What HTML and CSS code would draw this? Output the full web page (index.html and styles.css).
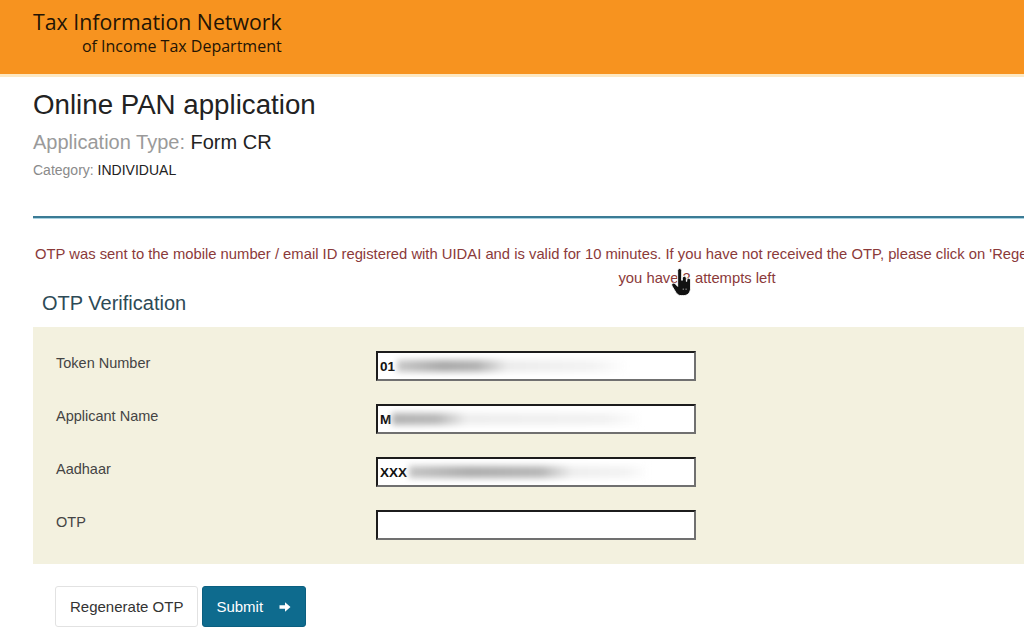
FILE: index.html
```html
<!DOCTYPE html>
<html lang="en">
<head>
<meta charset="utf-8">
<title>Online PAN application</title>
<link rel="stylesheet" href="styles.css">
</head>
<body>
<header class="top">
  <div class="brand">
    <div class="brand-main">Tax Information Network</div>
    <div class="brand-sub">of Income Tax Department</div>
  </div>
</header>
<main class="page">
  <section class="intro">
    <h1 class="title">Online PAN application</h1>
    <p class="app-type"><span class="muted">Application Type:</span> Form CR</p>
    <p class="category"><span class="muted">Category:</span> INDIVIDUAL</p>
  </section>
  <hr class="divider">
  <div class="msg">
    <p class="msg-line">OTP was sent to the mobile number / email ID registered with UIDAI and is valid for 10 minutes. If you have not received the OTP, please click on 'Regenerate OTP'.</p>
    <p class="msg-attempts">you have 2 attempts left</p>
    <svg class="cursor" viewBox="0 0 18 26" width="20" height="29" aria-hidden="true">
      <path d="M6 2.2a1.8 1.8 0 0 1 3.6 0V11h.6V9.2a1.8 1.8 0 0 1 3.6 0V12h.4v-1.2a1.7 1.7 0 0 1 3.4 0V18c0 4-2.6 6.8-6.2 6.8H9.2c-2.2 0-3.6-1.1-4.8-2.9L.9 16.2a1.8 1.8 0 0 1 2.9-2.1L6 16.5Z" fill="#111" stroke="#fff" stroke-width="0.8"/>
      <path d="M10.5 19h1.2M13 19h1.2" stroke="#bbb" stroke-width="0.8"/>
    </svg>
  </div>
  <h2 class="section-title">OTP Verification</h2>
  <form class="panel">
    <div class="row">
      <label class="label">Token Number</label>
      <div class="field"><span class="val">01</span><span class="blur blur-a"></span></div>
    </div>
    <div class="row">
      <label class="label">Applicant Name</label>
      <div class="field"><span class="val">M</span><span class="blur blur-b"></span></div>
    </div>
    <div class="row">
      <label class="label">Aadhaar</label>
      <div class="field"><span class="val">XXX</span><span class="blur blur-c"></span></div>
    </div>
    <div class="row">
      <label class="label">OTP</label>
      <div class="field"></div>
    </div>
  </form>
  <div class="actions">
    <button type="button" class="btn btn-light">Regenerate OTP</button>
    <button type="button" class="btn btn-primary">Submit
      <svg class="arrow" viewBox="0 0 12 12" width="12" height="12" aria-hidden="true"><path d="M0.5 4.3H6V1.2L11.5 6 6 10.8V7.7H0.5Z" fill="#fff"/></svg>
    </button>
  </div>
</main>
</body>
</html>
```

FILE: styles.css
```css
html, body {
  margin: 0;
  padding: 0;
  overflow: hidden;
  background: #fff;
  font-family: "Liberation Sans", Arial, sans-serif;
}

.top {
  box-sizing: content-box;
  height: 66px;
  padding-top: 8px;
  padding-left: 33px;
  background: #f7931f;
  border-bottom: 3px solid #fde8c2;
}

.brand {
  display: inline-flex;
  flex-direction: column;
  align-items: flex-end;
  color: #231405;
  font-family: "Open Sans", "Noto Sans", sans-serif;
}

.brand-main {
  font-size: 21.3px;
  line-height: 28px;
}

.brand-sub {
  font-size: 16px;
  line-height: 20px;
}

.page {
  width: 1328px;
  padding-left: 33px;
}

.intro {
  padding-top: 12px;
}

.title {
  margin: 0;
  font-size: 27.7px;
  line-height: 32px;
  font-weight: normal;
  color: #222;
}

.app-type {
  margin: 9px 0 0;
  font-size: 20px;
  line-height: 24px;
  color: #222;
}

.category {
  margin: 7px 0 0;
  font-size: 14px;
  line-height: 18px;
  color: #222;
}

.muted {
  color: #9a9a9a;
}

.category .muted {
  color: #8a8a8a;
}

.divider {
  margin: 37px 0 0;
  border: 0;
  height: 2px;
  background: #3b7b95;
  box-shadow: 0 1px 0 #a9d3e2;
}

.msg {
  position: relative;
  margin-top: 24px;
  color: #8b3a3a;
  font-size: 14.8px;
  line-height: 24px;
}

.msg p {
  margin: 0;
}

.msg-line {
  white-space: nowrap;
  padding-left: 2px;
}

.msg-attempts {
  text-align: center;
}

.cursor {
  position: absolute;
  left: 638px;
  top: 26px;
}

.section-title {
  margin: 1px 0 0 9px;
  font-size: 20px;
  line-height: 24px;
  font-weight: normal;
  color: #2d4a56;
}

.panel {
  margin: 12px 0 0;
  background: #f3f1df;
  padding: 24px 0 24px 23px;
  display: flex;
  flex-direction: column;
  gap: 23px;
}

.row {
  display: grid;
  grid-template-columns: 320px 320px;
  align-items: start;
}

.label {
  font-size: 14.5px;
  line-height: 18px;
  padding-top: 3px;
  color: #444;
}

.field {
  height: 30px;
  box-sizing: border-box;
  background: #fff;
  border: 2px solid;
  border-color: #1c1c1c #707070 #707070 #1c1c1c;
  display: flex;
  align-items: center;
  padding-left: 2px;
  overflow: hidden;
}

.val {
  font-size: 13.5px;
  font-weight: bold;
  color: #111;
}

.blur {
  display: inline-block;
  height: 12px;
  filter: blur(3px);
}

.blur-a {
  width: 230px;
  margin-left: 2px;
  background: linear-gradient(90deg, #c8c8c8 0%, #a9a9a9 20%, #b2b2b2 35%, #ececec 48%, #f3f3f3 85%, #fff 100%);
}

.blur-b {
  width: 250px;
  margin-left: 1px;
  background: linear-gradient(90deg, #b3b3b3 0%, #b8b8b8 18%, #eeeeee 30%, #f2f2f2 85%, #fff 100%);
}

.blur-c {
  width: 240px;
  margin-left: 2px;
  background: linear-gradient(90deg, #c4c4c4 0%, #adadad 25%, #b6b6b6 55%, #eeeeee 68%, #f3f3f3 90%, #fff 100%);
}

.actions {
  display: flex;
  gap: 4px;
  margin-top: 22px;
  padding-left: 22px;
}

.btn {
  height: 41px;
  font-family: "Liberation Sans", Arial, sans-serif;
  font-size: 15px;
  border-radius: 3px;
  cursor: pointer;
  display: inline-flex;
  align-items: center;
}

.btn-light {
  background: #fff;
  color: #333;
  border: 1px solid #e2e2e2;
  padding: 0 14px;
}

.btn-primary {
  background: #0e6b8e;
  color: #fff;
  border: 1px solid #0b5f80;
  padding: 0 14px 0 13px;
  gap: 16px;
}

.arrow {
  display: block;
}
```
